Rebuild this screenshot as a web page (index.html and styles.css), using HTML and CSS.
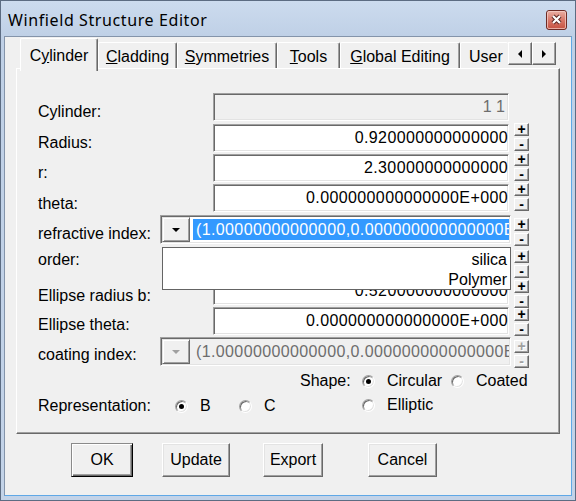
FILE: index.html
```html
<!DOCTYPE html>
<html>
<head>
<meta charset="utf-8">
<title>Winfield Structure Editor</title>
<link rel="stylesheet" href="styles.css">
</head>
<body>
<div class="window">
  <div class="titlebar">
    <span class="title">Winfield Structure Editor</span>
    <span class="close">
      <svg width="21" height="20" viewBox="0 0 21 20">
        <defs>
          <linearGradient id="cg" x1="0" y1="0" x2="0" y2="1">
            <stop offset="0" stop-color="#eab2a6"/>
            <stop offset="0.5" stop-color="#d9786a"/>
            <stop offset="1" stop-color="#c4503f"/>
          </linearGradient>
        </defs>
        <rect x="0.5" y="0.5" width="20" height="19" rx="2.5" fill="url(#cg)" stroke="#6e2b25"/>
        <rect x="1.5" y="1.5" width="18" height="17" rx="1.5" fill="none" stroke="#f6d2ca" stroke-opacity="0.7"/>
        <path d="M7 6 L14 13 M14 6 L7 13" stroke="#5a2520" stroke-width="4.2"/>
        <path d="M7 6 L14 13 M14 6 L7 13" stroke="#ffffff" stroke-width="2.2"/>
      </svg>
    </span>
  </div>
  <div class="client">
    <div class="tabstrip">
      <div class="tab active t-cyl">C<u>y</u>linder</div>
      <div class="tab t-clad"><u>C</u>ladding</div>
      <div class="tab t-sym"><u>S</u>ymmetries</div>
      <div class="tab t-tools"><u>T</u>ools</div>
      <div class="tab t-glob"><u>G</u>lobal Editing</div>
      <div class="tab clipped">User</div>
      <div class="tabarrows">
        <span class="arrowbtn"><svg width="5" height="8" viewBox="0 0 5 8"><polygon points="4,0 4,8 0,4" fill="#000"/></svg></span>
        <span class="arrowbtn"><svg width="5" height="8" viewBox="0 0 5 8"><polygon points="0,0 0,8 4,4" fill="#000"/></svg></span>
      </div>
    </div>
    <div class="panel">
      <div class="form">
        <div class="lbl">Cylinder:</div>
        <div class="edit disabled">1 1</div>

        <div class="lbl">Radius:</div>
        <div class="edit">0.920000000000000</div>
        <div class="spin"><span class="sb">+</span><span class="sb">-</span></div>

        <div class="lbl">r:</div>
        <div class="edit">2.30000000000000</div>
        <div class="spin"><span class="sb">+</span><span class="sb">-</span></div>

        <div class="lbl l-theta">theta:</div>
        <div class="edit">0.000000000000000E+000</div>
        <div class="spin"><span class="sb">+</span><span class="sb">-</span></div>

        <div class="lbl short l-refr">refractive index:</div>
        <div class="combo">
          <span class="dd"><svg width="8" height="4" viewBox="0 0 8 4"><polygon points="0,0 8,0 4,4" fill="#000"/></svg></span>
          <span class="ctext sel">(1.00000000000000,0.000000000000000E+000)</span>
          <div class="droplist">
            <div class="item">silica</div>
            <div class="item">Polymer</div>
          </div>
        </div>
        <div class="spin s-refr"><span class="sb">+</span><span class="sb">-</span></div>

        <div class="lbl l-order">order:</div>
        <div class="edit">1</div>
        <div class="spin s-order"><span class="sb">+</span><span class="sb">-</span></div>

        <div class="lbl">Ellipse radius b:</div>
        <div class="edit">0.520000000000000</div>
        <div class="spin s-ellb"><span class="sb">+</span><span class="sb">-</span></div>

        <div class="lbl l-ellt">Ellipse theta:</div>
        <div class="edit">0.000000000000000E+000</div>
        <div class="spin s-ellt"><span class="sb">+</span><span class="sb">-</span></div>

        <div class="lbl short l-coat">coating index:</div>
        <div class="combo disabled">
          <span class="dd"><svg width="8" height="4" viewBox="0 0 8 4"><polygon points="0,0 8,0 4,4" fill="#a0a0a0"/></svg></span>
          <span class="ctext">(1.00000000000000,0.000000000000000E+000)</span>
        </div>
        <div class="spin s-coat disabled"><span class="sb">+</span><span class="sb">-</span></div>
      </div>

      <div class="options">
        <div class="opt-shape">Shape:</div>
        <label class="radio-item c-circ"><span class="radio checked"></span>Circular</label>
        <label class="radio-item c-coat"><span class="radio"></span>Coated</label>

        <div class="opt-repr">Representation:</div>
        <label class="radio-item c-b"><span class="radio checked"></span>B</label>
        <label class="radio-item c-c"><span class="radio"></span>C</label>
        <label class="radio-item c-ell"><span class="radio"></span>Elliptic</label>
      </div>
    </div>
    <div class="buttons">
      <span class="btn btn-ok">OK</span>
      <span class="btn btn-update">Update</span>
      <span class="btn btn-export">Export</span>
      <span class="btn btn-cancel">Cancel</span>
    </div>
  </div>
</div>
</body>
</html>
```

FILE: styles.css
```css
* { box-sizing: border-box; }
html, body { margin: 0; padding: 0; }
body {
  width: 576px;
  height: 501px;
  overflow: hidden;
  font-family: "Liberation Sans", Arial, sans-serif;
  font-size: 16px;
  color: #000;
  background: #c3d3e8;
}
.window {
  width: 576px;
  height: 501px;
  display: flex;
  flex-direction: column;
  border: 1px solid #5c6c82;
  background: linear-gradient(#ccdbee, #bfd0e6 36px, #c3d3e8);
}
.titlebar {
  height: 35px;
  flex: none;
  display: flex;
  align-items: center;
  justify-content: space-between;
  padding: 2px 8px 0 7px;
}
.title {
  font-family: "Noto Sans", "Open Sans", sans-serif;
  font-size: 16px;
  letter-spacing: 0.6px;
  color: #000;
}
.close { display: block; width: 21px; height: 20px; }
.close svg { display: block; }

.client {
  flex: 1;
  margin: 0 3px 4px 3px;
  background: #f0f0f0;
  border: 1px solid;
  border-color: #8494aa #5fa8e6 #5fa8e6 #8494aa;
  padding: 0 11px;
  display: flex;
  flex-direction: column;
}

/* tabs */
.tabstrip {
  height: 31px;
  flex: none;
  display: flex;
  align-items: flex-start;
  padding: 0 4px 0 6px;
}
.tab {
  flex: none;
  margin-top: 5px;
  height: 26px;
  padding: 2px 0 0 0;
  line-height: 23px;
  text-align: center;
  white-space: nowrap;
  background: #f0f0f0;
  border-top: 1px solid #fff;
  border-left: 1px solid #fff;
  border-right: 1px solid #696969;
  box-shadow: inset -1px 0 #a0a0a0;
  border-radius: 2px 2px 0 0;
}
.tab.active {
  position: relative;
  z-index: 2;
  margin: 1px 0 0 -2px;
  height: 33px;
  padding-top: 5px;
}
.t-cyl { width: 78px; }
.t-clad { width: 79px; }
.t-sym { width: 100px; }
.t-tools { width: 63px; }
.t-glob { width: 120px; }
.tab.clipped {
  flex: 1;
  min-width: 0;
  overflow: hidden;
  text-align: left;
  padding-left: 8px;
  border-right: none;
  box-shadow: none;
}
.tabarrows {
  margin-top: 5px;
  display: flex;
  flex: none;
}
.arrowbtn {
  width: 24px;
  height: 23px;
  display: flex;
  align-items: center;
  justify-content: center;
  background: #f0f0f0;
  border: 1px solid;
  border-color: #fff #696969 #696969 #fff;
  box-shadow: inset -1px -1px #a0a0a0;
}

/* panel */
.panel {
  height: 366px;
  flex: none;
  border: 1px solid;
  border-color: #fff #696969 #696969 #fff;
  box-shadow: inset -1px -1px #a0a0a0;
  padding: 23px 0 0 21px;
}
.form {
  display: grid;
  grid-template-columns: 122px 53px 296px 5px 15px;
  grid-template-rows: 31px 30px 30px 32px 31px 30px 30px 31px 31px;
}
.lbl {
  grid-column: 1 / 3;
  white-space: nowrap;
  line-height: 18px;
  padding-top: 11px;
}
.lbl.short { grid-column: 1; }
.l-theta { padding-top: 12px; }
.l-refr { padding-top: 10px; }
.l-order { padding-top: 5px; }
.l-ellt { padding-top: 10px; }
.l-coat { padding-top: 9px; }

.edit {
  grid-column: 3;
  align-self: start;
  margin-top: 1px;
  height: 28px;
  border: 1px solid;
  border-color: #a0a0a0 #fff #fff #a0a0a0;
  box-shadow: inset 1px 1px #696969, inset -1px -1px #e3e3e3;
  background: #fff;
  text-align: right;
  padding-right: 0;
  line-height: 26px;
  letter-spacing: 0.38px;
  white-space: nowrap;
  overflow: hidden;
}
.edit.disabled {
  background: #f0f0f0;
  color: #6d6d6d;
  padding-right: 3px;
  letter-spacing: 0;
}

.combo {
  grid-column: 2 / 4;
  margin-right: -2px;
  align-self: start;
  height: 29px;
  position: relative;
  display: flex;
  border: 1px solid;
  border-color: #a0a0a0 #fff #fff #a0a0a0;
  box-shadow: inset 1px 1px #696969, inset -1px -1px #e3e3e3;
  padding: 1px;
  background: #fff;
}
.combo.disabled { background: #f0f0f0; }
.dd {
  width: 28px;
  flex: none;
  display: flex;
  align-items: center;
  justify-content: center;
  background: #f0f0f0;
  border: 1px solid;
  border-color: #e3e3e3 #696969 #696969 #e3e3e3;
  box-shadow: inset 1px 1px #fff, inset -1px -1px #a0a0a0;
}
.dd svg { display: block; }
.ctext {
  flex: 1;
  min-width: 0;
  overflow: hidden;
  white-space: nowrap;
  margin: 2px 0 2px 3px;
  padding-left: 3px;
  line-height: 21px;
  letter-spacing: 0.38px;
}
.combo.disabled .ctext { color: #6d6d6d; }
.ctext.sel {
  background: #3399ff;
  color: #fff;
}
.droplist {
  position: absolute;
  z-index: 5;
  left: 1px;
  top: 31px;
  width: 349px;
  height: 43px;
  background: #fff;
  border: 1px solid #646464;
  padding: 2px 3px 0 0;
  text-align: right;
}
.item { line-height: 20px; }

.spin {
  grid-column: 5;
  align-self: start;
  display: flex;
  flex-direction: column;
  gap: 2px;
}
.s-refr { margin-top: 3px; }
.s-order { margin-top: 4px; }
.s-ellb { margin-top: 4px; }
.s-ellt { margin-top: 2px; }
.s-coat { margin-top: 3px; }
.sb {
  width: 15px;
  height: 13px;
  background: #f0f0f0;
  border: 1px solid;
  border-color: #fff #696969 #696969 #fff;
  box-shadow: inset -1px -1px #a0a0a0;
  font-size: 14px;
  font-weight: bold;
  line-height: 10px;
  text-align: center;
}
.spin.disabled .sb {
  color: #a0a0a0;
  text-shadow: 1px 1px #fff;
}

/* options */
.options {
  margin-top: 4px;
  display: grid;
  grid-template-columns: 137px 64px 61px 62px 89px auto;
  grid-template-rows: 18px 20px;
  row-gap: 6px;
  line-height: 18px;
}
.opt-shape { grid-column: 4; grid-row: 1; }
.c-circ { grid-column: 5; grid-row: 1; }
.c-coat { grid-column: 6; grid-row: 1; }
.opt-repr { grid-column: 1; grid-row: 2; align-self: center; }
.c-b { grid-column: 2; grid-row: 2; }
.c-c { grid-column: 3; grid-row: 2; }
.c-ell { grid-column: 5; grid-row: 2; align-self: start; }
.radio-item {
  display: flex;
  align-items: center;
  gap: 12px;
  white-space: nowrap;
}
.radio {
  width: 13px;
  height: 13px;
  flex: none;
  border-radius: 50%;
  background: #fff;
  border: 1px solid;
  border-color: #a0a0a0 #fff #fff #a0a0a0;
  box-shadow: inset 1px 1px #696969, inset -1px -1px #e3e3e3;
  position: relative;
}
.radio.checked::after {
  content: "";
  position: absolute;
  left: 3px;
  top: 3px;
  width: 5px;
  height: 5px;
  border-radius: 50%;
  background: #000;
}

/* buttons */
.buttons {
  margin-top: 9px;
  display: flex;
  height: 34px;
}
.btn {
  height: 34px;
  display: flex;
  align-items: center;
  justify-content: center;
  background: #f0f0f0;
  border: 1px solid;
  border-color: #fff #696969 #696969 #fff;
  box-shadow: inset -1px -1px #a0a0a0, inset 1px 1px #e3e3e3;
}
.btn-ok {
  margin-left: 55px;
  width: 62px;
  border-color: #8a8a8a #000 #000 #8a8a8a;
  box-shadow: inset 1px 1px #fff, inset -1px -1px #696969, inset -2px -2px #a0a0a0;
}
.btn-update { margin-left: 29px; width: 68px; }
.btn-export { margin-left: 33px; width: 60px; }
.btn-cancel { margin-left: 45px; width: 69px; }
```
